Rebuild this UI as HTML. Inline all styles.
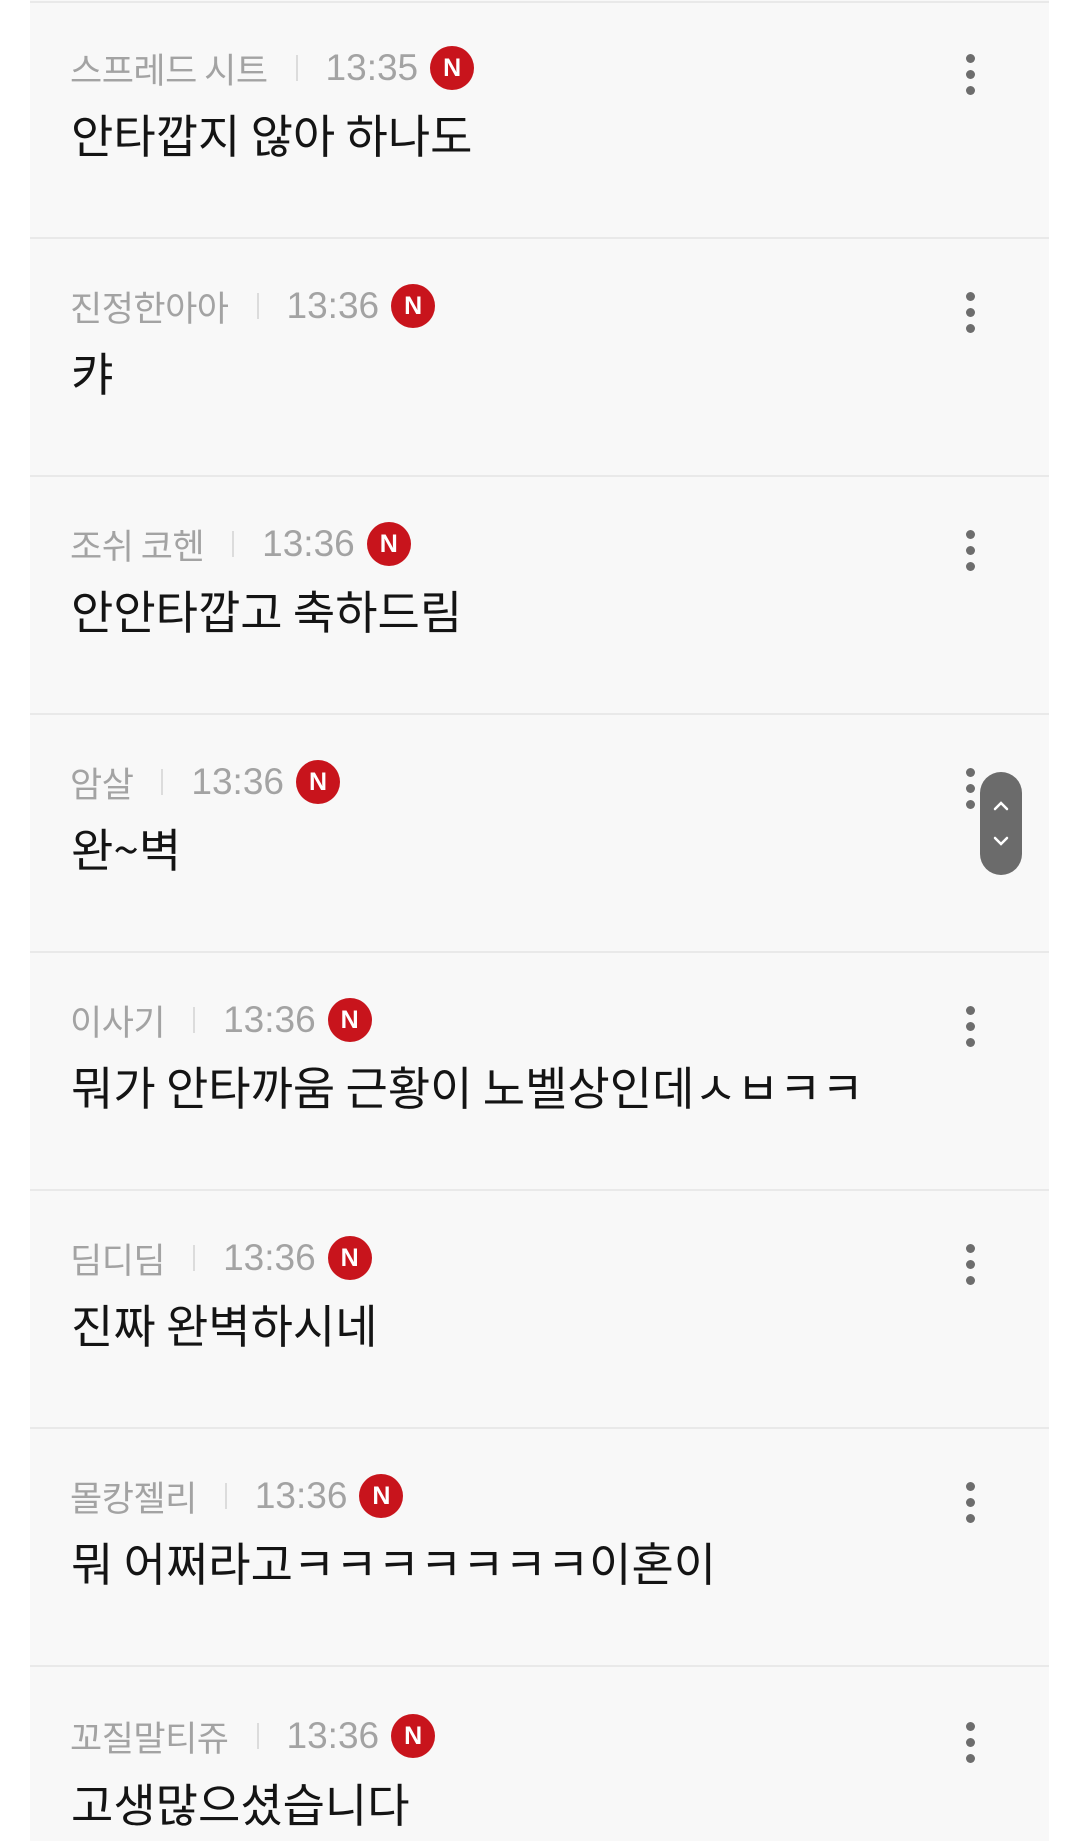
<!DOCTYPE html>
<html><head><meta charset="utf-8"><style>
html,body{margin:0;padding:0;background:#fff;}
body{width:1080px;height:1841px;position:relative;overflow:hidden;font-family:"Liberation Sans","Noto Sans CJK KR",sans-serif;}
.card{position:absolute;left:30px;width:1019px;top:0;height:1841px;background:#f8f8f8;}
.line{position:absolute;left:30px;width:1019px;height:2px;background:#e9e9e9;}
.meta{position:absolute;left:70px;height:44px;display:flex;align-items:center;font-size:37px;color:#a3a3a3;white-space:nowrap;}
.meta .nm{font-family:"Noto Sans CJK KR",sans-serif;font-size:35px;letter-spacing:-0.5px;}
.meta .sep{display:inline-block;width:2px;height:26px;background:#dcdcdc;margin:0 28px;}
.meta .n{display:inline-block;width:44px;height:44px;border-radius:50%;background:#c8141c;color:#fff;font-weight:bold;font-size:25px;text-align:center;line-height:44px;margin-left:12px;}
.body{position:absolute;left:71px;height:60px;line-height:60px;font-size:46px;font-weight:400;color:#141414;font-family:"Noto Sans CJK KR",sans-serif;white-space:nowrap;}
.dots{position:absolute;left:966px;width:10px;}
.dots i{display:block;width:9px;height:9px;border-radius:50%;background:#6d6d6d;margin-bottom:7px;}
.pill{position:absolute;left:980px;top:772px;width:42px;height:103px;border-radius:21px;background:#6b6b6b;}
</style></head><body>
<div class="card"></div>
<div class="line" style="top:1px"></div>
<div class="line" style="top:237px"></div>
<div class="line" style="top:475px"></div>
<div class="line" style="top:713px"></div>
<div class="line" style="top:951px"></div>
<div class="line" style="top:1189px"></div>
<div class="line" style="top:1427px"></div>
<div class="line" style="top:1665px"></div>

<div class="meta" style="top:46px"><span class="nm">스프레드 시트</span><span class="sep"></span>13:35<span class="n">N</span></div>
<div class="body" style="top:104px">안타깝지 않아 하나도</div>
<div class="dots" style="top:54px"><i></i><i></i><i></i></div>

<div class="meta" style="top:284px"><span class="nm">진정한아아</span><span class="sep"></span>13:36<span class="n">N</span></div>
<div class="body" style="top:342px">캬</div>
<div class="dots" style="top:292px"><i></i><i></i><i></i></div>

<div class="meta" style="top:522px"><span class="nm">조쉬 코헨</span><span class="sep"></span>13:36<span class="n">N</span></div>
<div class="body" style="top:580px">안안타깝고 축하드림</div>
<div class="dots" style="top:530px"><i></i><i></i><i></i></div>

<div class="meta" style="top:760px"><span class="nm">암살</span><span class="sep"></span>13:36<span class="n">N</span></div>
<div class="body" style="top:818px">완~벽</div>
<div class="dots" style="top:768px"><i></i><i></i><i></i></div>
<div class="pill"><svg width="42" height="103" viewBox="0 0 42 103"><path d="M15 37 L21 31 L27 37" fill="none" stroke="#fff" stroke-width="2.5" stroke-linecap="round"/><path d="M15 66 L21 72 L27 66" fill="none" stroke="#fff" stroke-width="2.5" stroke-linecap="round"/></svg></div>

<div class="meta" style="top:998px"><span class="nm">이사기</span><span class="sep"></span>13:36<span class="n">N</span></div>
<div class="body" style="top:1056px">뭐가 안타까움 근황이 노벨상인데ㅅㅂㅋㅋ</div>
<div class="dots" style="top:1006px"><i></i><i></i><i></i></div>

<div class="meta" style="top:1236px"><span class="nm">딤디딤</span><span class="sep"></span>13:36<span class="n">N</span></div>
<div class="body" style="top:1294px">진짜 완벽하시네</div>
<div class="dots" style="top:1244px"><i></i><i></i><i></i></div>

<div class="meta" style="top:1474px"><span class="nm">몰캉젤리</span><span class="sep"></span>13:36<span class="n">N</span></div>
<div class="body" style="top:1532px">뭐 어쩌라고ㅋㅋㅋㅋㅋㅋㅋ이혼이</div>
<div class="dots" style="top:1482px"><i></i><i></i><i></i></div>

<div class="meta" style="top:1714px"><span class="nm">꼬질말티쥬</span><span class="sep"></span>13:36<span class="n">N</span></div>
<div class="body" style="top:1773px">고생많으셨습니다</div>
<div class="dots" style="top:1722px"><i></i><i></i><i></i></div>
</body></html>
